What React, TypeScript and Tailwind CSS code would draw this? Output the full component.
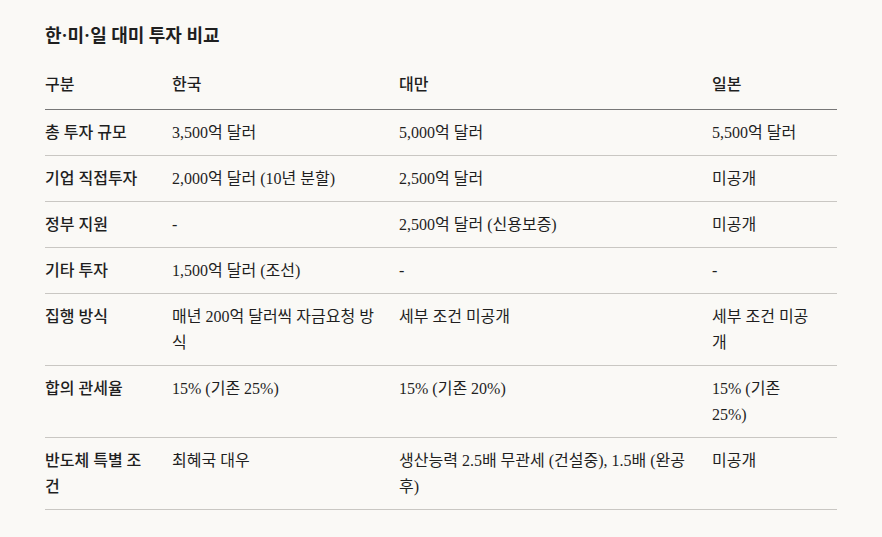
import React from 'react';

const font = { fontFamily: '"Liberation Serif", "Noto Sans CJK KR", serif' };

const rows: string[][] = [
  ['총 투자 규모', '3,500억 달러', '5,000억 달러', '5,500억 달러'],
  ['기업 직접투자', '2,000억 달러 (10년 분할)', '2,500억 달러', '미공개'],
  ['정부 지원', '-', '2,500억 달러 (신용보증)', '미공개'],
  ['기타 투자', '1,500억 달러 (조선)', '-', '-'],
  ['집행 방식', '매년 200억 달러씩 자금요청 방식', '세부 조건 미공개', '세부 조건 미공개'],
  ['합의 관세율', '15% (기존 25%)', '15% (기존 20%)', '15% (기존 25%)'],
  ['반도체 특별 조건', '최혜국 대우', '생산능력 2.5배 무관세 (건설중), 1.5배 (완공 후)', '미공개'],
];

export default function App() {
  return (
    <div className="min-h-[537px] w-[882px] bg-[#faf9f6] text-[#1f1f1f] px-[45px] pt-[22px]" style={font}>
      <h2 className="text-[18px] font-semibold leading-[28px] mb-[12px]">한·미·일 대미 투자 비교</h2>
      <table className="w-[792px] table-fixed border-collapse text-[16px] leading-[26px]">
        <colgroup>
          <col className="w-[127px]" />
          <col className="w-[227px]" />
          <col className="w-[313px]" />
          <col className="w-[125px]" />
        </colgroup>
        <thead>
          <tr className="border-b border-[#777]">
            {['구분', '한국', '대만', '일본'].map((h) => (
              <th key={h} className="text-left font-medium pr-5 pt-[10px] pb-[11px] align-top">{h}</th>
            ))}
          </tr>
        </thead>
        <tbody>
          {rows.map((r) => (
            <tr key={r[0]} className="border-b border-[#c9c7c3]">
              {r.map((c, i) => (
                <td key={i} className={`pr-5 py-[9.5px] align-top ${i === 0 ? 'font-medium' : ''}`}>{c}</td>
              ))}
            </tr>
          ))}
        </tbody>
      </table>
    </div>
  );
}
